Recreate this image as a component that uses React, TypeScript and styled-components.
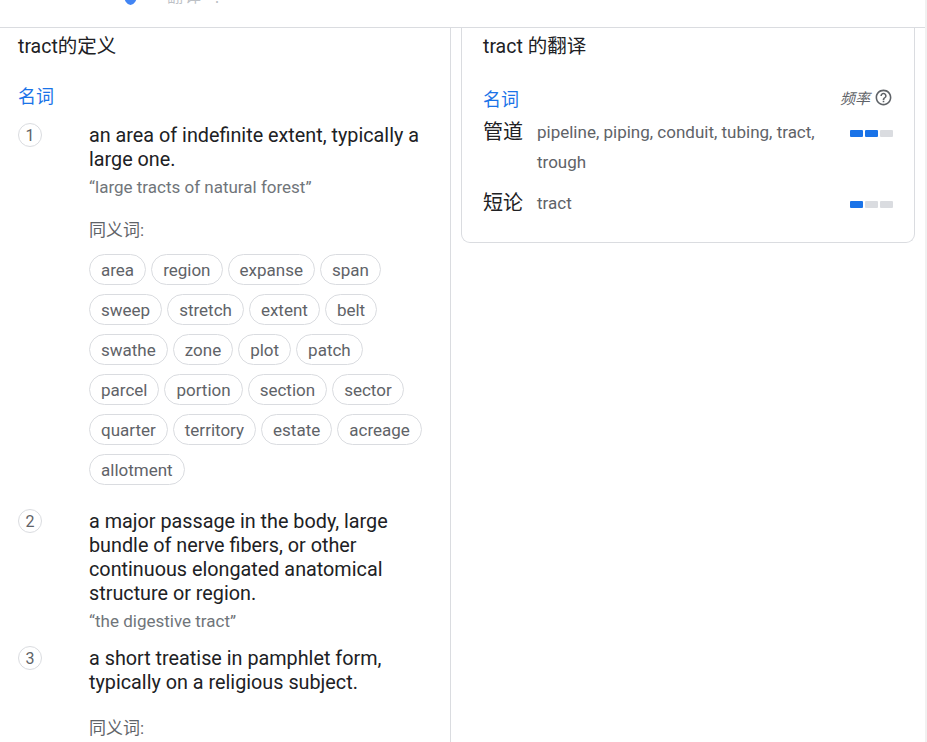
import React from "react";
import styled, { createGlobalStyle } from "styled-components";

const GlobalStyle = createGlobalStyle`
  html, body { margin: 0; padding: 0; background: #fff; }
  body { font-family: Roboto, "Noto Sans CJK SC", Arial, sans-serif; color: #202124; }
  * { box-sizing: border-box; }
`;

const Page = styled.div`
  display: flex;
  width: 927px;
  height: 742px;
  overflow: hidden;
`;

const Main = styled.div`
  width: 925px;
  display: flex;
  flex-direction: column;
`;

const ScrollTrack = styled.div`
  width: 2px;
  background: #f1f1f1;
`;

const Header = styled.header`
  height: 28px;
  border-bottom: 1px solid #dadce0;
  overflow: hidden;
  flex-shrink: 0;
`;

const HeaderInner = styled.div`
  display: flex;
  align-items: center;
  gap: 30px;
  margin-top: -17px;
  padding-left: 124px;
  height: 24px;
`;

const HeaderLogo = styled.span`
  width: 13px;
  height: 20px;
  border-radius: 50%;
  background: #4285f4;
`;

const HeaderText = styled.span`
  font-size: 16px;
  color: #bdc1c6;
  letter-spacing: 2px;
`;

const Body = styled.div`
  flex: 1;
  display: grid;
  grid-template-columns: 451px 1fr;
`;

const LeftCol = styled.section`
  border-right: 1px solid #dadce0;
  padding: 7px 0 0 18px;
`;

const RightCol = styled.section`
  padding: 0 10px;
`;

const Title = styled.h2`
  margin: 0;
  font-size: 19.5px;
  line-height: 24px;
  font-weight: 400;
  color: #202124;
`;

const Pos = styled.div<{ $mt: number }>`
  margin-top: ${(p) => p.$mt}px;
  font-size: 18px;
  line-height: 24px;
  color: #1a73e8;
`;

const DefList = styled.ol`
  list-style: none;
  margin: 15px 0 0;
  padding: 0;
  display: flex;
  flex-direction: column;
  gap: 13px;
`;

const DefItem = styled.li`
  display: grid;
  grid-template-columns: 71px 1fr;
`;

const Num = styled.span`
  width: 24px;
  height: 24px;
  margin-top: -1px;
  border: 1px solid #dadce0;
  border-radius: 50%;
  display: flex;
  align-items: center;
  justify-content: center;
  font-size: 16px;
  color: #5f6368;
`;

const DefBody = styled.div`
  padding-right: 24px;
`;

const DefText = styled.div`
  font-size: 19.8px;
  line-height: 24px;
  color: #202124;
`;

const Example = styled.div`
  margin: 3px 0 1px;
  font-size: 17px;
  line-height: 24px;
  color: #70757a;
`;

const SynLabel = styled.div<{ $afterExample: boolean }>`
  margin-top: ${(p) => (p.$afterExample ? 19 : 21)}px;
  font-size: 17px;
  line-height: 24px;
  color: #5f6368;
`;

const Chips = styled.div`
  display: flex;
  flex-wrap: wrap;
  gap: 9px 5px;
  margin-top: 12px;
  padding-bottom: 12px;
`;

const Chip = styled.span`
  height: 31px;
  padding: 0 11px;
  border: 1px solid #dadce0;
  border-radius: 16px;
  display: inline-flex;
  align-items: center;
  font-size: 17px;
  color: #5f6368;
`;

const Card = styled.div`
  border: 1px solid #dadce0;
  border-top: none;
  border-radius: 0 0 9px 9px;
  padding: 7px 21px 24px;
`;

const PosRow = styled.div`
  display: flex;
  align-items: center;
  justify-content: space-between;
  margin-top: 29px;
`;

const Freq = styled.span`
  display: inline-flex;
  align-items: center;
  gap: 4px;
  margin-top: -5px;
  font-size: 15px;
  font-style: italic;
  color: #5f6368;
`;

const TransList = styled.div`
  display: flex;
  flex-direction: column;
  gap: 11px;
  margin-top: 5px;
`;

const TransRow = styled.div`
  display: grid;
  grid-template-columns: 54px 1fr 60px;
  align-items: start;
`;

const TransWord = styled.span`
  font-size: 20px;
  line-height: 30px;
  color: #202124;
`;

const TransSyn = styled.span`
  font-size: 17px;
  line-height: 30px;
  color: #5f6368;
`;

const Bars = styled.span`
  display: flex;
  justify-content: flex-end;
  gap: 2px;
  padding-top: 13px;
`;

const Bar = styled.span<{ $on: boolean }>`
  width: 13px;
  height: 7px;
  border-radius: 1px;
  background: ${(p) => (p.$on ? "#1a73e8" : "#dadce0")};
`;

const HelpIcon = () => (
  <svg width="19" height="19" viewBox="0 0 24 24" fill="#5f6368">
    <path d="M11 18h2v-2h-2v2zm1-16C6.48 2 2 6.48 2 12s4.48 10 10 10 10-4.48 10-10S17.52 2 12 2zm0 18c-4.41 0-8-3.59-8-8s3.59-8 8-8 8 3.59 8 8-3.59 8-8 8zm0-14c-2.21 0-4 1.79-4 4h2c0-1.1.9-2 2-2s2 .9 2 2c0 2-3 1.75-3 5h2c0-2.25 3-2.5 3-5 0-2.21-1.79-4-4-4z" />
  </svg>
);

type Def = { text: string; example?: string; synonyms?: string[] };

const defs: Def[] = [
  {
    text: "an area of indefinite extent, typically a large one.",
    example: "“large tracts of natural forest”",
    synonyms: [
      "area", "region", "expanse", "span", "sweep", "stretch", "extent", "belt",
      "swathe", "zone", "plot", "patch", "parcel", "portion", "section", "sector",
      "quarter", "territory", "estate", "acreage", "allotment",
    ],
  },
  {
    text: "a major passage in the body, large bundle of nerve fibers, or other continuous elongated anatomical structure or region.",
    example: "“the digestive tract”",
  },
  {
    text: "a short treatise in pamphlet form, typically on a religious subject.",
    synonyms: [],
  },
];

const translations = [
  { word: "管道", syn: "pipeline, piping, conduit, tubing, tract, trough", level: 2 },
  { word: "短论", syn: "tract", level: 1 },
];

export default function App() {
  return (
    <>
      <GlobalStyle />
      <Page>
        <Main>
          <Header>
            <HeaderInner>
              <HeaderLogo />
              <HeaderText>翻译 ⋮</HeaderText>
            </HeaderInner>
          </Header>
          <Body>
            <LeftCol>
              <Title>tract的定义</Title>
              <Pos $mt={26}>名词</Pos>
              <DefList>
                {defs.map((d, i) => (
                  <DefItem key={i}>
                    <Num>{i + 1}</Num>
                    <DefBody>
                      <DefText>{d.text}</DefText>
                      {d.example && <Example>{d.example}</Example>}
                      {d.synonyms && (
                        <>
                          <SynLabel $afterExample={!!d.example}>同义词:</SynLabel>
                          {d.synonyms.length > 0 && (
                            <Chips>
                              {d.synonyms.map((s) => (
                                <Chip key={s}>{s}</Chip>
                              ))}
                            </Chips>
                          )}
                        </>
                      )}
                    </DefBody>
                  </DefItem>
                ))}
              </DefList>
            </LeftCol>
            <RightCol>
              <Card>
                <Title>tract 的翻译</Title>
                <PosRow>
                  <Pos $mt={0}>名词</Pos>
                  <Freq>
                    频率 <HelpIcon />
                  </Freq>
                </PosRow>
                <TransList>
                  {translations.map((t) => (
                    <TransRow key={t.word}>
                      <TransWord>{t.word}</TransWord>
                      <TransSyn>{t.syn}</TransSyn>
                      <Bars>
                        {[0, 1, 2].map((k) => (
                          <Bar key={k} $on={k < t.level} />
                        ))}
                      </Bars>
                    </TransRow>
                  ))}
                </TransList>
              </Card>
            </RightCol>
          </Body>
        </Main>
        <ScrollTrack />
      </Page>
    </>
  );
}
